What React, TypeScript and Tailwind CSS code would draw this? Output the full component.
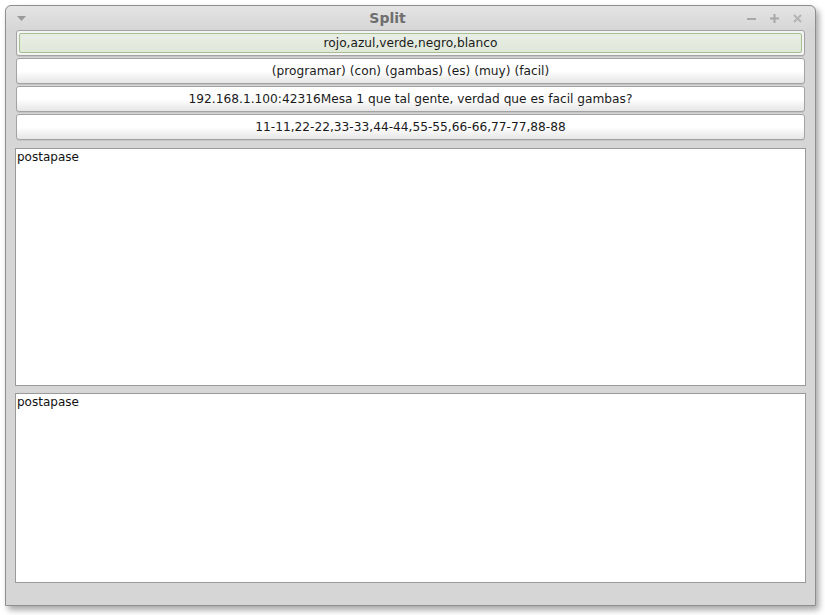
import React from "react";

const BUTTONS = [
  "rojo,azul,verde,negro,blanco",
  "(programar) (con) (gambas) (es) (muy) (facil)",
  "192.168.1.100:42316Mesa 1 que tal gente, verdad que es facil gambas?",
  "11-11,22-22,33-33,44-44,55-55,66-66,77-77,88-88",
];

export default function App() {
  return (
    <div className="h-[615px] w-[825px] bg-white pl-[5px] pt-[5px] font-['DejaVu_Sans',sans-serif]">
      {/* Window */}
      <div className="flex h-[601px] w-[811px] flex-col rounded-t-[6px] border border-[#8e8e8e] bg-[#d6d6d6] shadow-[3px_4px_6px_rgba(0,0,0,0.35)]">
        {/* Title bar */}
        <div className="relative flex h-[24px] items-center justify-center rounded-t-[6px] bg-gradient-to-b from-[#e4e4e4] to-[#d6d6d6] pr-[46px]">
          <svg className="absolute left-[11px] top-[10px]" width="9" height="6" viewBox="0 0 9 6">
            <path d="M0 0H9L4.5 5Z" fill="#9a9a9a" />
          </svg>
          <span className="text-[14px] font-bold text-[#6e6e6e]">Split</span>
          <div className="absolute right-[12px] top-[7px] flex items-center gap-[12px]">
            <svg width="11" height="11" viewBox="0 0 11 11">
              <path d="M1 6H10" stroke="#a8a8a8" strokeWidth="2" />
            </svg>
            <svg width="11" height="11" viewBox="0 0 11 11">
              <path d="M1 5.5H10M5.5 1V10" stroke="#a8a8a8" strokeWidth="2" />
            </svg>
            <svg width="11" height="11" viewBox="0 0 11 11">
              <path d="M2 2L9 9M9 2L2 9" stroke="#b4b4b4" strokeWidth="2" />
            </svg>
          </div>
        </div>

        {/* Body */}
        <div className="flex flex-1 flex-col px-[9px] pb-[22px]">
          <div className="flex flex-col gap-[2px] px-px">
            {BUTTONS.map((label, i) => (
              <div
                key={label}
                className={`flex h-[26px] items-center justify-center rounded-[3px] border border-[#a3a3a3] text-[12.2px] text-[#1a1a1a] shadow-[0_1px_0_rgba(0,0,0,0.08)] ${
                  i === 0
                    ? "bg-[#f4f4f4] p-[2px]"
                    : "bg-gradient-to-b from-white via-white to-[#e6e6e6]"
                }`}
              >
                {i === 0 ? (
                  <div className="flex h-full w-full items-center justify-center rounded-[2px] border border-[#a7c08f] bg-gradient-to-b from-[#e9eee4] to-[#e0e8d9]">
                    {label}
                  </div>
                ) : (
                  label
                )}
              </div>
            ))}
          </div>

          <div className="mt-[8px] h-[238px] border border-[#9a9a9a] bg-white px-px text-[12px] leading-[16px] text-[#111]">
            postapase
          </div>
          <div className="mt-[7px] flex-1 border border-[#9a9a9a] bg-white px-px text-[12px] leading-[16px] text-[#111]">
            postapase
          </div>
        </div>
      </div>
    </div>
  );
}
